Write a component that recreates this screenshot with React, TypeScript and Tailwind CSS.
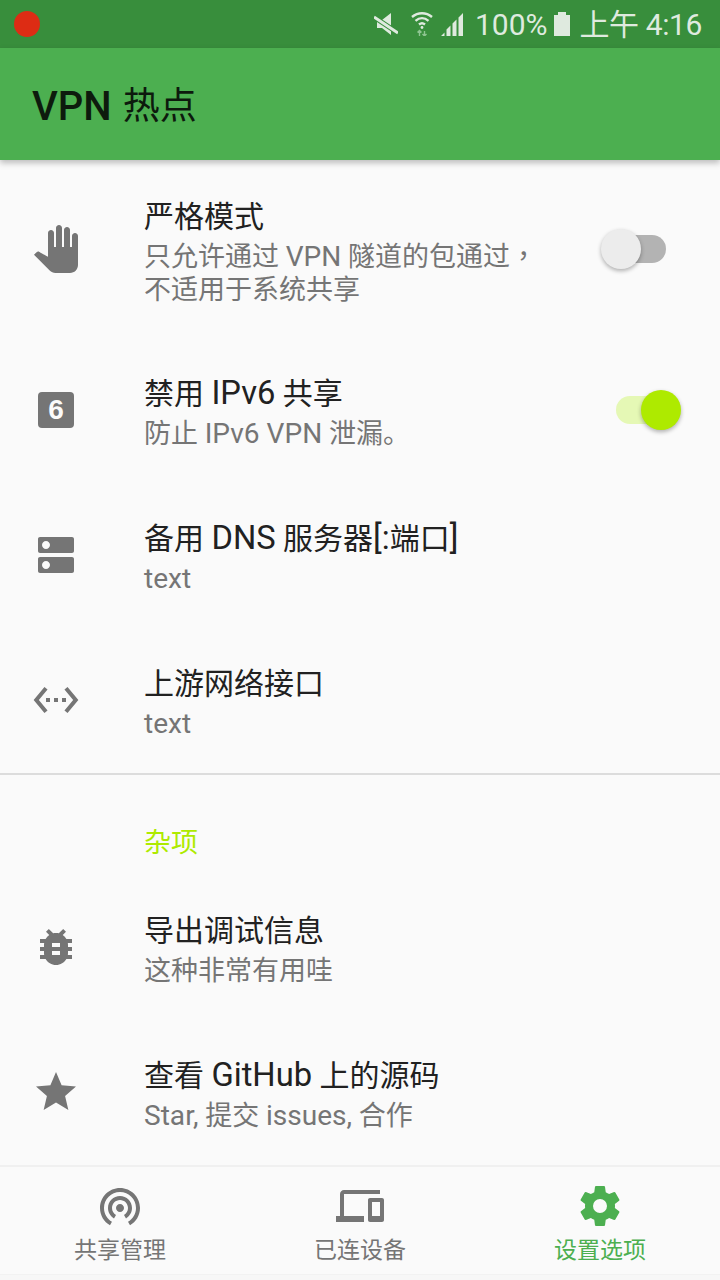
import type { ReactNode } from "react";

const FONT = "font-['Roboto','Noto_Sans_CJK_SC',sans-serif]";

const ICONS = {
  hand: "M23 5.5V20c0 2.2-1.8 4-4 4h-7.3c-1.08 0-2.1-.43-2.85-1.19L1 14.83s1.26-1.23 1.3-1.25c.22-.19.49-.29.79-.29.22 0 .42.06.6.16.04.01 4.31 2.46 4.31 2.46V4c0-.83.67-1.5 1.5-1.5S11 3.17 11 4v7h1V1.5c0-.83.67-1.5 1.5-1.5S15 .67 15 1.5V11h1V2.5c0-.83.67-1.5 1.5-1.5s1.5.67 1.5 1.5V11h1V5.5c0-.83.67-1.5 1.5-1.5s1.5.67 1.5 1.5z",
  dns: "M20 13H4c-.55 0-1 .45-1 1v6c0 .55.45 1 1 1h16c.55 0 1-.45 1-1v-6c0-.55-.45-1-1-1zM7 19c-1.1 0-2-.9-2-2s.9-2 2-2 2 .9 2 2-.9 2-2 2zM20 3H4c-.55 0-1 .45-1 1v6c0 .55.45 1 1 1h16c.55 0 1-.45 1-1V4c0-.55-.45-1-1-1zM7 9c-1.1 0-2-.9-2-2s.9-2 2-2 2 .9 2 2-.9 2-2 2z",
  ethernet: "M7.77 6.76L6.23 5.48.82 12l5.41 6.52 1.54-1.28L3.42 12l4.35-5.24zM7 13h2v-2H7v2zm10-2h-2v2h2v-2zm-6 2h2v-2h-2v2zm6.77-7.52l-1.54 1.28L20.58 12l-4.35 5.24 1.54 1.28L23.18 12l-5.41-6.52z",
  bug: "M20 8h-2.81c-.45-.78-1.07-1.45-1.82-1.96L17 4.41 15.59 3l-2.17 2.17C12.96 5.06 12.49 5 12 5c-.49 0-.96.06-1.41.17L8.41 3 7 4.41l1.62 1.63C7.88 6.55 7.26 7.22 6.81 8H4v2h2.09c-.05.33-.09.66-.09 1v1H4v2h2v1c0 .34.04.67.09 1H4v2h2.81c1.04 1.79 2.97 3 5.19 3s4.15-1.21 5.19-3H20v-2h-2.09c.05-.33.09-.66.09-1v-1h2v-2h-2v-1c0-.34-.04-.67-.09-1H20V8zm-6 8h-4v-2h4v2zm0-4h-4v-2h4v2z",
  star: "M12 17.27L18.18 21l-1.64-7.03L22 9.24l-7.19-.61L12 2 9.19 8.63 2 9.24l5.46 4.73L5.82 21z",
  tethering: "M12 11c-1.1 0-2 .9-2 2s.9 2 2 2 2-.9 2-2-.9-2-2-2zm6 2c0-3.31-2.69-6-6-6s-6 2.69-6 6c0 2.22 1.21 4.15 3 5.19l1-1.74c-1.19-.7-2-1.97-2-3.45 0-2.21 1.79-4 4-4s4 1.79 4 4c0 1.48-.81 2.75-2 3.45l1 1.74c1.79-1.04 3-2.97 3-5.19zM12 3C6.48 3 2 7.48 2 13c0 3.7 2.01 6.92 4.99 8.65l1-1.73C5.61 18.53 4 15.96 4 13c0-4.42 3.58-8 8-8s8 3.58 8 8c0 2.96-1.61 5.53-4 6.92l1 1.73c2.99-1.73 5-4.95 5-8.65 0-5.52-4.48-10-10-10z",
  devices: "M4 6h18V4H4c-1.1 0-2 .9-2 2v11H0v3h14v-3H4V6zm19 2h-6c-.55 0-1 .45-1 1v10c0 .55.45 1 1 1h6c.55 0 1-.45 1-1V9c0-.55-.45-1-1-1zm-1 9h-4v-7h4v7z",
  settings: "M12,15.5A3.5,3.5 0 0,1 8.5,12A3.5,3.5 0 0,1 12,8.5A3.5,3.5 0 0,1 15.5,12A3.5,3.5 0 0,1 12,15.5M19.43,12.97C19.47,12.65 19.5,12.33 19.5,12C19.5,11.67 19.47,11.34 19.43,11L21.54,9.37C21.73,9.22 21.78,8.95 21.66,8.73L19.66,5.27C19.54,5.05 19.27,4.96 19.05,5.05L16.56,6.05C16.04,5.66 15.5,5.32 14.87,5.07L14.5,2.42C14.46,2.18 14.25,2 14,2H10C9.75,2 9.54,2.18 9.5,2.42L9.13,5.07C8.5,5.32 7.96,5.66 7.44,6.05L4.95,5.05C4.73,4.96 4.46,5.05 4.34,5.27L2.34,8.73C2.21,8.95 2.27,9.22 2.46,9.37L4.57,11C4.53,11.34 4.5,11.67 4.5,12C4.5,12.33 4.53,12.65 4.57,12.97L2.46,14.63C2.27,14.78 2.21,15.05 2.34,15.27L4.34,18.73C4.46,18.95 4.73,19.03 4.95,18.95L7.44,17.94C7.96,18.34 8.5,18.68 9.13,18.93L9.5,21.58C9.54,21.82 9.75,22 10,22H14C14.25,22 14.46,21.82 14.5,21.58L14.87,18.93C15.5,18.67 16.04,18.34 16.56,17.94L19.05,18.95C19.27,19.03 19.54,18.95 19.66,18.73L21.66,15.27C21.78,15.05 21.73,14.78 21.54,14.63L19.43,12.97Z",
};

// latin runs sit a bit larger than the CJK around them in the screenshot
function T({ children }: { children: ReactNode }) {
  return <span className="text-[1.09em] leading-none">{children}</span>;
}

function S({ children }: { children: ReactNode }) {
  return <span className="text-[1.04em] leading-none">{children}</span>;
}

function Icon({ d, className = "text-[#757575]" }: { d: string; className?: string }) {
  return (
    <svg viewBox="0 0 24 24" className={`h-12 w-12 fill-current ${className}`}>
      <path d={d} />
    </svg>
  );
}

function Ipv6Icon() {
  return (
    <div className="flex h-12 w-12 items-center justify-center">
      <div className="flex h-9 w-9 items-center justify-center rounded-[4px] bg-[#757575] font-['Liberation_Sans',sans-serif] text-[28px] leading-none font-bold text-[#fafafa]">
        6
      </div>
    </div>
  );
}

function Toggle({ on }: { on: boolean }) {
  return (
    <div className={`relative flex h-10 w-20 items-center ${on ? "justify-end pr-px" : "pl-px"}`}>
      <div className={`h-7 w-16 rounded-full ${on ? "bg-[#e5f8b5]" : "bg-[#b3b3b3]"}`} />
      <div
        className={`absolute top-0 h-10 w-10 rounded-full shadow-[0_2px_4px_rgba(0,0,0,0.3)] ${
          on ? "right-0 bg-[#aeea00]" : "left-0 bg-[#ececec]"
        }`}
      />
    </div>
  );
}

function Row({
  icon,
  title,
  sub,
  right,
  height = "h-[145px] pb-px",
}: {
  icon: ReactNode;
  title: ReactNode;
  sub: ReactNode;
  right?: ReactNode;
  height?: string;
}) {
  return (
    <div className={`flex items-center pr-[39px] pl-8 ${height}`}>
      <div className="mr-16 shrink-0">{icon}</div>
      <div className="min-w-0 flex-1 pt-1">
        <div className="text-[30px] leading-[42px] text-[#212121]">{title}</div>
        <div className="mt-[3px] text-[27px] leading-[33px] text-[#757575]">{sub}</div>
      </div>
      {right}
    </div>
  );
}

function NavItem({ d, label, active }: { d: string; label: string; active?: boolean }) {
  return (
    <div className="flex flex-1 flex-col items-center pt-[15px]">
      <Icon d={d} className={active ? "text-[#4caf50]" : "text-[#757575]"} />
      <div className={`mt-[5px] text-[23px] leading-[32px] ${active ? "text-[#4caf50]" : "text-[#757575]"}`}>{label}</div>
    </div>
  );
}

function StatusBar() {
  return (
    <div className="flex h-12 shrink-0 items-center bg-[#388e3c] pr-[18px] pl-[14px] text-[30px] text-[#dfeadf]">
      <div className="h-[26px] w-[26px] rounded-full bg-[#dd2c14]" />
      <div className="flex-1" />
      <svg viewBox="0 0 24 24" className="mr-3 h-6 w-6">
        <path d="M3 8h5l9-7v22l-9-7H3z" fill="#dfeadf" />
        <path d="M0 5l24 16" stroke="#388e3c" strokeWidth="5" />
        <path d="M0 5l24 16" stroke="#dfeadf" strokeWidth="3" />
      </svg>
      <svg viewBox="0 0 24 24" className="mr-[6px] h-6 w-6" fill="none" stroke="#dfeadf" strokeWidth="2.4">
        <path d="M2 5c6-5 14-5 20 0M5.5 8.8c4-3.4 9-3.4 13 0M9 12.5c2-1.6 4-1.6 6 0" />
        <circle cx="12" cy="15.5" r="1.4" fill="#dfeadf" stroke="none" />
        <path d="M9.5 24v-5M7.5 20.5l2-2 2 2M14.5 19v5M12.5 22l2 2 2-2" stroke="#8fc592" strokeWidth="1.4" />
      </svg>
      <svg viewBox="0 0 24 24" className="mr-[11px] h-6 w-6" fill="#dfeadf">
        <path d="M1 24l3.5-3.5V24zM6.5 24v-6.5l4-4V24zM12.5 24V11.5l4-4V24zM18.5 24V5.5L23 1v23z" />
      </svg>
      <span className="pt-[2px] leading-none">100%</span>
      <div className="mr-[10px] ml-[6px] flex h-6 w-4 flex-col items-center">
        <div className="h-[3px] w-2 bg-[#dfeadf]" />
        <div className="w-full flex-1 bg-[#dfeadf]" />
      </div>
      <span className="pt-[2px] leading-none tracking-[-0.4px]">上午 4:16</span>
    </div>
  );
}

export default function App() {
  return (
    <div className={`flex h-[1280px] w-[720px] flex-col overflow-hidden bg-[#fafafa] ${FONT}`}>
      <StatusBar />
      <div className="relative z-10 flex h-[112px] shrink-0 items-center bg-[#4caf50] pt-[5px] pl-8 text-[#0d1a0d] shadow-[0_3px_6px_rgba(0,0,0,0.25)]">
        <span className="text-[40px] leading-none font-medium">VPN</span>
        <span className="ml-[11px] text-[37px] leading-none">热点</span>
      </div>

      <div className="flex-1">
        <Row
          height="h-[178px]"
          icon={<Icon d={ICONS.hand} />}
          title="严格模式"
          sub={
            <>
              只允许通过 <S>VPN</S> 隧道的包通过
              <span className="font-['Noto_Sans_CJK_TC',sans-serif] leading-none">，</span>
              <br />
              不适用于系统共享
            </>
          }
          right={<Toggle on={false} />}
        />
        <Row
          icon={<Ipv6Icon />}
          title={
            <>
              禁用 <T>IPv6</T> 共享
            </>
          }
          sub={
            <>
              防止 <S>IPv6 VPN</S> 泄漏。
            </>
          }
          right={<Toggle on />}
        />
        <Row
          icon={<Icon d={ICONS.dns} />}
          title={
            <>
              备用 <T>DNS</T> 服务器<T>[:</T>端口<T>]</T>
            </>
          }
          sub={<S>text</S>}
        />
        <Row icon={<Icon d={ICONS.ethernet} />} title="上游网络接口" sub={<S>text</S>} />

        <div className="h-[2px] bg-[#dcdcdc]" />

        <div className="flex h-[100px] items-center pt-9 pl-[144px] text-[27px] text-[#aeea00]">杂项</div>

        <Row icon={<Icon d={ICONS.bug} />} title="导出调试信息" sub="这种非常有用哇" />
        <Row
          icon={<Icon d={ICONS.star} />}
          title={
            <>
              查看 <T>GitHub</T> 上的源码
            </>
          }
          sub={
            <>
              <S>Star,</S> 提交 <S>issues,</S> 合作
            </>
          }
        />
      </div>

      <div className="flex h-[109px] shrink-0 border-t-2 border-t-[#f0f0f0] bg-[#fafafa]">
        <NavItem d={ICONS.tethering} label="共享管理" />
        <NavItem d={ICONS.devices} label="已连设备" />
        <NavItem d={ICONS.settings} label="设置选项" active />
      </div>
      <div className="h-[6px] shrink-0 border-t border-t-[#f2f2f2] bg-[#f7f7f7]" />
    </div>
  );
}
